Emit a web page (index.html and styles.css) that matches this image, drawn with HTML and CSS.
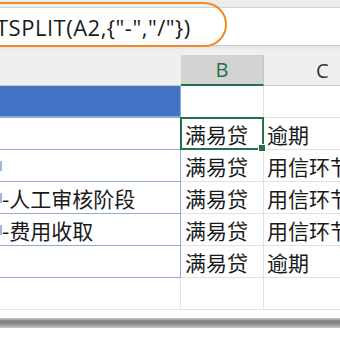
FILE: index.html
```html
<!DOCTYPE html>
<html>
<head>
<meta charset="utf-8">
<link rel="stylesheet" href="styles.css">
</head>
<body>
<div class="app">
  <div class="topbar"></div>
  <div class="formula"><span class="ftext">TSPLIT(A2,{"-","/"})</span></div>
  <div class="oval"></div>
  <div class="gap"></div>
  <div class="sheet">
    <div class="hdr hdr-a"></div>
    <div class="hdr hdr-b">B</div>
    <div class="hdr hdr-c">C</div>

    <div class="cell a sel-fill"></div>
    <div class="cell b"></div>
    <div class="cell c"></div>

    <div class="cell a"></div>
    <div class="cell b active">满易贷<span class="handle"></span></div>
    <div class="cell c">逾期</div>

    <div class="cell a"><span class="mark"></span></div>
    <div class="cell b">满易贷</div>
    <div class="cell c">用信环节</div>

    <div class="cell a"><span class="mark"></span>-人工审核阶段</div>
    <div class="cell b">满易贷</div>
    <div class="cell c">用信环节</div>

    <div class="cell a"><span class="mark"></span>-费用收取</div>
    <div class="cell b">满易贷</div>
    <div class="cell c">用信环节</div>

    <div class="cell a"></div>
    <div class="cell b">满易贷</div>
    <div class="cell c">逾期</div>

    <div class="cell a plain"></div>
    <div class="cell b"></div>
    <div class="cell c"></div>
  </div>
  <div class="bottom-gap"></div>
  <div class="shadowbar"></div>
</div>
</body>
</html>
```
FILE: styles.css
```css
html, body {
  margin: 0;
  padding: 0;
  background: #ffffff;
}
.app {
  position: relative;
  width: 340px;
  height: 340px;
  overflow: hidden;
  font-family: "Noto Sans", "Noto Sans CJK SC", sans-serif;
  color: #222;
}
.topbar {
  height: 7px;
  background: #ececec;
  border-bottom: 1px solid #d2d2d2;
}
.formula {
  height: 37px;
  background: #ffffff;
  border-bottom: 1px solid #cdcdcd;
  display: flex;
  align-items: center;
  overflow: hidden;
  white-space: nowrap;
}
.ftext {
  font-family: "Open Sans", "Noto Sans", sans-serif;
  font-size: 22px;
  letter-spacing: 0.5px;
  margin-left: -4px;
  margin-top: 1px;
  color: #1a1a1a;
}
.oval {
  position: absolute;
  left: -60px;
  top: 2px;
  width: 283px;
  height: 41px;
  border: 2px solid #f08a24;
  border-radius: 23px;
}
.gap {
  height: 9px;
  background: linear-gradient(#e2e2e2, #efefef 4px, #efefef);
}
.sheet {
  display: grid;
  grid-template-columns: 181px 83px 1fr;
  grid-template-rows: 31px repeat(7, 32px);
  font-size: 21px;
  font-family: "Noto Sans CJK SC", "Noto Sans", sans-serif;
  color: #1a1a1a;
}
.hdr {
  display: flex;
  align-items: center;
  justify-content: center;
  font-family: "Open Sans", "Noto Sans", sans-serif;
  font-size: 20px;
  color: #333;
  background: #efefef;
  border-bottom: 1px solid #c6c6c6;
  box-sizing: border-box;
}
.hdr-b {
  background: #d3d3d3;
  color: #217346;
  border-bottom: 2px solid #217346;
  border-right: 1px solid #c6c6c6;
}
.hdr-c {
  justify-content: flex-start;
  padding-left: 52px;
}
.cell {
  box-sizing: border-box;
  display: flex;
  align-items: center;
  white-space: nowrap;
  overflow: hidden;
  border-bottom: 1px solid #e1e1e1;
  position: relative;
}
.cell.a {
  border-bottom: 1px solid #8eaadb;
  border-right: 1px solid #8eaadb;
  padding-left: 0;
}
.cell.a.plain {
  border-bottom: 1px solid #e6e6e6;
  border-right: 1px solid #e6e6e6;
}
.cell.a.sel-fill {
  background: #4472c4;
  border-bottom: 2px solid #8eaadb;
}
.cell.b {
  border-right: 1px solid #e1e1e1;
  padding-left: 4px;
}
.cell.c {
  padding-left: 3px;
}
.cell.b.active {
  border: 2px solid #217346;
  margin-left: -1px;
  margin-top: -1px;
  padding-left: 3px;
  overflow: visible;
  z-index: 2;
}
.handle {
  position: absolute;
  right: -4px;
  bottom: -4px;
  width: 6px;
  height: 6px;
  background: #217346;
  border: 1px solid #ffffff;
}
.mark {
  display: inline-block;
  width: 2px;
  height: 10px;
  background: #9fb7e2;
  margin-right: 0;
}
.bottom-gap {
  height: 8px;
  background: #ffffff;
}
.shadowbar {
  height: 10px;
  background: linear-gradient(#d0d0d0, #7d7d7d 30%, #8c8c8c 60%, #c8c8c8);
}
```
